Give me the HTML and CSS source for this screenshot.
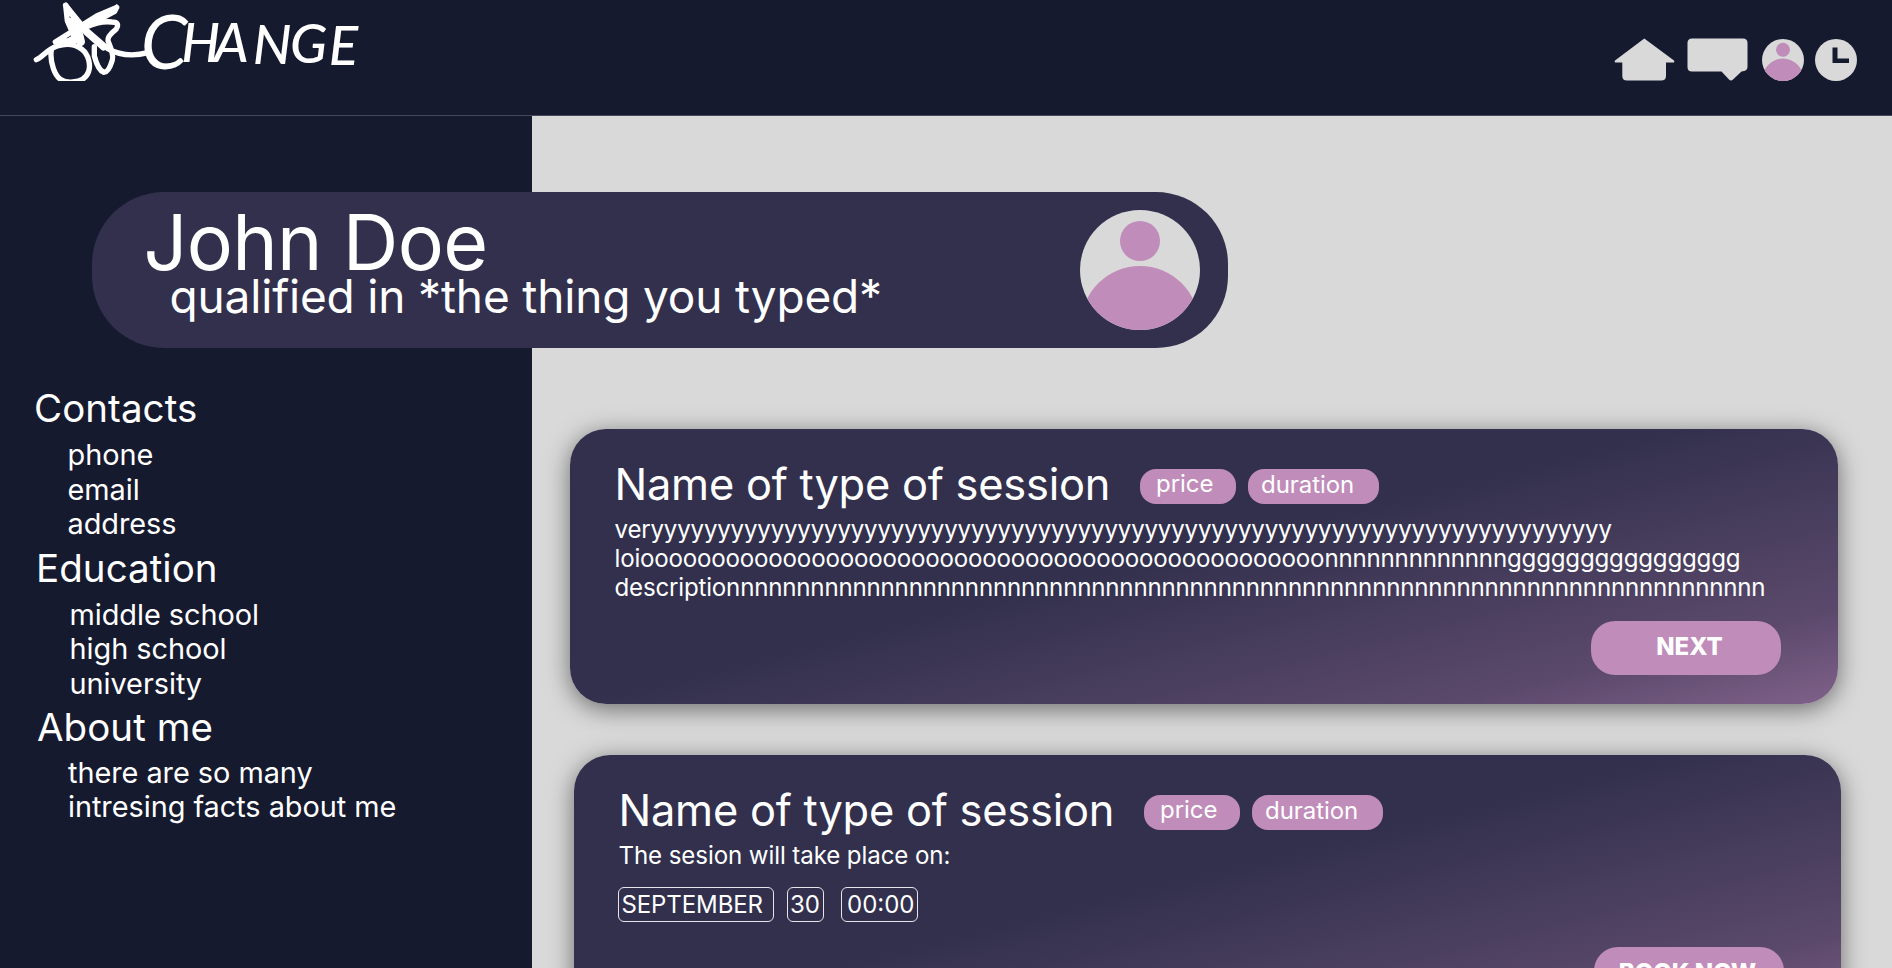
FILE: index.html
```html
<!DOCTYPE html>
<html lang="en">
<head>
<meta charset="utf-8">
<title>Change - John Doe</title>
<link rel="stylesheet" href="styles.css">
</head>
<body>
<svg class="defs" width="0" height="0" aria-hidden="true">
  <symbol id="avatar" viewBox="0 0 120 120">
    <clipPath id="face"><circle cx="60" cy="60" r="60"/></clipPath>
    <circle cx="60" cy="60" r="60" fill="#d9d9d9"/>
    <circle cx="60" cy="31" r="20" fill="#c08cba"/>
    <circle cx="60" cy="115" r="59" fill="#c08cba" clip-path="url(#face)"/>
  </symbol>
</svg>
<header class="topbar">
  <svg class="logo" viewBox="0 0 1050 345" aria-label="Change">
    <clipPath id="base"><path d="M0 0H1050V243H0Z"/></clipPath>
    <g class="scribble" clip-path="url(#base)">
      <path d="M137 16L192 84L262 145Q315 176 384 158"/>
      <path d="M137 16L142 62L165 115M137 16L168 62L200 100L250 144"/>
      <path d="M290 22L230 48L106 126L150 122L178 108M290 22L284 34L192 84"/>
      <path d="M49 179C70 170 80 148 112 138S165 132 186 148S212 196 206 214S185 244 158 246S112 240 100 205Q90 175 94 150"/>
      <path d="M196 82Q240 62 275 66Q302 66 288 88Q262 108 264 122Q282 165 277 180Q266 218 251 217Q234 210 223 168V140"/>
      <path class="thick" d="M150 66L172 112L150 126M172 84L182 125"/>
    </g>
    <g class="wordmark">
      <text class="initial" x="362" y="207">C</text>
      <text class="rest" x="484 582 698 810 926" y="187 187 193 190 194">HANGE</text>
    </g>
  </svg>
  <nav class="nav">
    <svg class="house" viewBox="0 0 61 43"><path d="M30.300 .5L60 22.500Q61 24.500 59 24.500H52V38Q52 42.500 47 42.500H13Q8.300 42.500 8.300 38V24.500H2Q0 24.500 1 22.500Z"/></svg>
    <svg class="bubble" viewBox="0 0 61 43"><path d="M5 .5H56Q60.500 .5 60.500 5V29Q60.500 33 54.500 33.500L46 41.500Q44 43.500 42 41.500L34.500 33.500H5Q.5 33.500 .5 29V5Q.5 .5 5 .5Z"/></svg>
    <svg class="user"><use href="#avatar"/></svg>
    <svg class="clock" viewBox="0 0 42 42"><circle cx="21" cy="21" r="21"/><path class="hands" d="M17.500 8.500H22.500V19.500H34V24H17.500Z"/></svg>
  </nav>
</header>
<div class="page">
  <aside class="sidebar">
    <section class="info">
      <h2>Contacts</h2>
      <ul><li>phone</li><li>email</li><li>address</li></ul>
    </section>
    <section class="info education">
      <h2>Education</h2>
      <ul><li>middle school</li><li>high school</li><li>university</li></ul>
    </section>
    <section class="info about">
      <h2>About me</h2>
      <ul><li>there are so many</li><li>intresing facts about me</li></ul>
    </section>
  </aside>
  <main class="sessions">
    <article class="card">
      <div class="head"><h3>Name of type of session</h3><span class="pill price">price</span><span class="pill duration">duration</span></div>
      <p class="text" id="description"></p>
      <button class="action">NEXT</button>
    </article>
    <article class="card second">
      <div class="head"><h3>Name of type of session</h3><span class="pill price">price</span><span class="pill duration">duration</span></div>
      <p class="text">The sesion will take place on:</p>
      <div class="slots"><span class="slot month">SEPTEMBER</span><span class="slot day">30</span><span class="slot time">00:00</span></div>
      <button class="action book">BOOK NOW</button>
    </article>
  </main>
  <section class="banner">
    <div class="who">
      <h1>John Doe</h1>
      <p>qualified in *the thing you typed*</p>
    </div>
    <svg class="portrait"><use href="#avatar"/></svg>
  </section>
</div>
<script src="script.js"></script>
</body>
</html>
```
FILE: script.js
```js
// Placeholder copy: a long session description.
const lines = [
  'ver' + 'y'.repeat(72),
  'loi' + 'o'.repeat(48) + 'n'.repeat(13) + 'g'.repeat(16),
  'descriptio' + 'n'.repeat(74)
];
const box = document.getElementById('description');
for (const line of lines) {
  const row = document.createElement('span');
  row.className = 'line';
  row.textContent = line;
  box.append(row);
}
```
FILE: styles.css
```css
* { box-sizing: border-box; margin: 0; padding: 0; }
body {
  height: 968px;
  overflow: hidden;
  background: #d9d9d9;
  color: #fff;
  font-family: Inter, "Liberation Sans", sans-serif;
  font-weight: 400;
}
h1, h2, h3 { font-weight: 400; white-space: nowrap; }
ul { list-style: none; }
.defs { position: absolute; }

.topbar {
  display: flex;
  justify-content: space-between;
  height: 116px;
  padding: 0 35px 0 20px;
  background: #161a2f;
  border-bottom: 1px solid #47485b;
}
.logo { width: 350px; height: 115px; overflow: visible; }
.scribble { fill: none; stroke: #fff; stroke-width: 16; stroke-linecap: round; stroke-linejoin: round; }
.scribble .thick { stroke-width: 26; }
.wordmark { fill: #fff; font-family: Lato, sans-serif; font-style: italic; }
.initial { font-size: 225px; font-weight: 400; }
.rest { font-size: 164px; font-weight: 500; }
.nav { display: flex; padding-top: 38px; }
.nav svg { height: 43px; fill: #d9d9d9; }
.house { width: 61px; margin-right: 12px; }
.bubble { width: 61px; margin-right: 14px; }
.nav .user, .nav .clock { width: 42px; height: 42px; margin-top: 1px; }
.nav .user { margin-right: 11px; }
.nav .hands { fill: #161a2f; }

.page { position: relative; display: flex; height: 852px; overflow: hidden; }
.sidebar {
  width: 532px;
  flex: none;
  padding: 269px 0 0 34px;
  background: #161a2f;
}
.info h2 { font-size: 38.500px; line-height: 46px; letter-spacing: .05px; }
.info ul { padding: 7px 0 0 33.500px; }
.info li { font-size: 28.900px; line-height: 34.700px; letter-spacing: -.05px; }
.education { padding: 2.500px 0 0 2px; }
.about { padding: 2.500px 0 0 3px; }
.about ul { padding: 5.500px 0 0 31px; }

.banner {
  position: absolute;
  left: 91.500px;
  top: 76px;
  width: 1136.500px;
  height: 155.500px;
  padding: 14.500px 28px 0 52px;
  display: flex;
  justify-content: space-between;
  border-radius: 72px;
  background: #32304d;
}
.banner h1 { font-size: 77px; line-height: 70px; letter-spacing: -.7px; }
.banner p { padding-left: 26px; font-size: 46px; line-height: 39px; letter-spacing: -.17px; white-space: nowrap; }
.portrait { width: 120px; height: 120px; margin-top: 3px; }

.sessions { padding: 313px 0 0 38px; }
.card {
  display: flex;
  flex-direction: column;
  width: 1268px;
  height: 275px;
  padding: 29px 57px 0 44px;
  border-radius: 36px;
  background: linear-gradient(166deg, #32304d 46%, #5b496c 84%, #806189 100%);
  box-shadow: 0 5px 24px rgba(0, 0, 0, .5);
}
.second { width: 1267px; margin: 51px 0 0 4px; }
.head { display: flex; align-items: flex-start; height: 58px; }
.head h3 { width: 525.500px; font-size: 43.400px; line-height: 53px; letter-spacing: -.22px; text-indent: .5px; }
.pill {
  height: 35px;
  margin-top: 11px;
  border-radius: 16px;
  background: #c08cba;
  font-size: 24px;
  line-height: 30px;
  letter-spacing: -.05px;
}
.price { width: 96px; padding-left: 16.500px; margin-right: 12px; }
.duration { width: 131px; padding-left: 13.500px; line-height: 32px; }
.text { height: 105px; font-size: 24.100px; line-height: 28.800px; letter-spacing: -.19px; text-indent: .5px; white-space: nowrap; }
.line { display: block; }
.action {
  align-self: flex-end;
  width: 190px;
  height: 54px;
  padding: 0 0 3px 7px;
  border: 0;
  border-radius: 24px;
  background: #c08cba;
  color: #fff;
  font: 800 24px/50px Inter, sans-serif;
}
.second .text { height: 45px; letter-spacing: -.1px; }
.slots { display: flex; height: 60px; }
.slot {
  height: 35px;
  border: 1px solid #e6e6ea;
  border-radius: 6px;
  font-size: 24px;
  line-height: 34px;
}
.month { width: 156px; padding-left: 2.500px; margin-right: 13px; letter-spacing: -.1px; }
.day { width: 37px; padding-left: 2px; margin-right: 17px; }
.time { width: 77px; padding-left: 5px; }
.book { padding-left: 0; padding-right: 3px; }
```
